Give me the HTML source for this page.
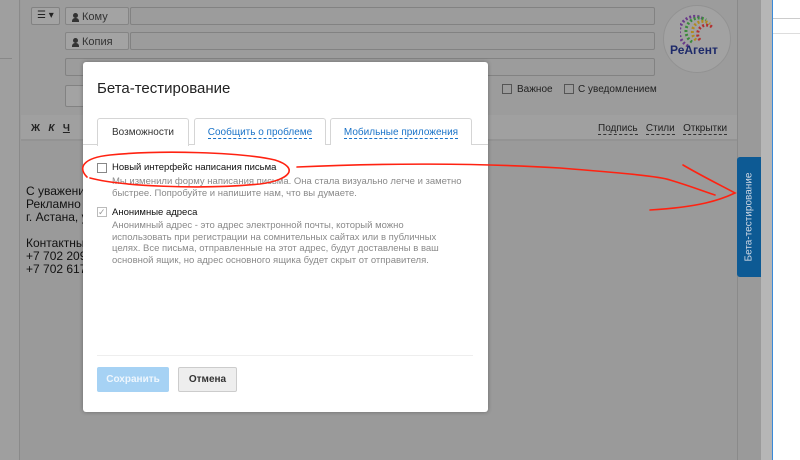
<!DOCTYPE html>
<html><head><meta charset="utf-8"><style>
*{box-sizing:border-box;margin:0;padding:0}
body{width:800px;height:460px;overflow:hidden;background:#9a9a9a;font-family:"Liberation Sans",Arial,sans-serif;position:relative}
.a{position:absolute}
.inp{position:absolute;background:#9c9c9c;border:1px solid #828282;border-radius:2px}
.lbl{position:absolute;background:#a3a3a3;border:1px solid #858585;border-radius:2px;font-size:11px;color:#333;padding:3px 0 0 16px}
.lbl:before{content:"";position:absolute;left:7px;top:5px;width:5px;height:5px;border-radius:50%;background:#333}
.lbl:after{content:"";position:absolute;left:6px;top:10px;width:7px;height:4px;background:#333;border-radius:3px 3px 0 0}
.dl{border-bottom:1px dashed #333}
.modal{position:absolute;left:83px;top:62px;width:405px;height:350px;background:#fff;border-radius:3px;box-shadow:0 0 4px rgba(0,0,0,.3)}
.tab{position:absolute;top:56px;height:27px;border:1px solid #d5d5d5;border-bottom:none;border-radius:3px 3px 0 0;font-size:10px;text-align:center;padding-top:8px;background:#fff}
.tab span{color:#1a73c8;border-bottom:1px dashed #1a73c8}
.cb{position:absolute;width:10px;height:10px;border:1px solid #888;background:#fff}
.t{position:absolute;font-size:9.5px;color:#111}
.d{position:absolute;font-size:9.5px;color:#8a8a8a;line-height:11.5px;white-space:nowrap}
</style></head><body>
<div class="a" style="left:0;top:0;width:20px;height:460px;background:#9f9f9f;border-right:1px solid #8a8a8a"></div>
<div class="a" style="left:0;top:58px;width:12px;height:1px;background:#888"></div>
<div class="a" style="left:21px;top:0;width:716px;height:115px;background:#9c9c9c"></div>
<div class="inp" style="left:31px;top:7px;width:29px;height:18px;background:#a3a3a3;font-size:10px;color:#222;padding:2px 0 0 5px">☰ ▾</div>
<div class="lbl" style="left:65px;top:7px;width:64px;height:18px">Кому</div>
<div class="inp" style="left:130px;top:7px;width:525px;height:18px"></div>
<div class="lbl" style="left:65px;top:32px;width:64px;height:18px">Копия</div>
<div class="inp" style="left:130px;top:32px;width:525px;height:18px"></div>
<div class="inp" style="left:65px;top:58px;width:590px;height:18px"></div>
<div class="inp" style="left:65px;top:85px;width:30px;height:22px;background:#a3a3a3"></div>
<div class="a" style="left:663px;top:5px;width:68px;height:68px;border-radius:50%;background:#a2a2a2;border:1px solid #929292"></div>
<svg class="a" style="left:680px;top:12px" width="40" height="36"><g fill="none" stroke-width="3" stroke-dasharray="2 2"><path d="M8 34 A14 14 0 0 1 22 6" stroke="#6a3a8a"/><path d="M12 30 A10 10 0 0 1 26 8" stroke="#3a8a3a"/><path d="M16 28 A8 8 0 0 1 30 12" stroke="#b08a20"/><path d="M20 28 A6 6 0 0 1 33 16" stroke="#b03030"/></g></svg>
<div class="a" style="left:670px;top:43px;font-size:12px;font-weight:bold;color:#1e2a6a">РеАгент</div>
<div class="cb" style="left:502px;top:84px;background:#9c9c9c;border-color:#555"></div>
<div class="a" style="left:517px;top:84px;font-size:10px;color:#222">Важное</div>
<div class="cb" style="left:564px;top:84px;background:#9c9c9c;border-color:#555"></div>
<div class="a" style="left:578px;top:84px;font-size:10px;color:#222">С уведомлением</div>
<div class="a" style="left:21px;top:115px;width:716px;height:26px;background:#a0a0a0;border-bottom:2px solid #939393"></div>
<div class="a" style="left:31px;top:123px;font-size:10px;font-weight:bold;color:#222">Ж &nbsp;&nbsp;<i>К</i> &nbsp;&nbsp;<u>Ч</u></div>
<div class="a" style="left:598px;top:123px;font-size:10px;color:#222"><span class="dl">Подпись</span>&nbsp;&nbsp;&nbsp;<span class="dl">Стили</span>&nbsp;&nbsp;&nbsp;<span class="dl">Открытки</span></div>
<div class="a" style="left:26px;top:185px;font-size:12px;color:#111;line-height:13px">С уважени<br>Рекламно -<br>г. Астана, у<br><br>Контактны<br>+7 702 209<br>+7 702 617</div>
<div class="a" style="left:737px;top:0;width:24px;height:460px;background:#9a9a9a;border-left:1px solid #8a8a8a"></div>
<div class="a" style="left:761px;top:0;width:11px;height:460px;background:#b6b6b6"></div>
<div class="a" style="left:772px;top:0;width:28px;height:460px;background:#fff;border-left:1px solid #3a8ad8"></div>
<div class="a" style="left:773px;top:18px;width:27px;height:1px;background:#ccc"></div>
<div class="a" style="left:773px;top:33px;width:27px;height:1px;background:#ddd"></div>
<div class="a" style="left:737px;top:157px;width:24px;height:120px;background:#0d5a94;border-radius:3px 0 0 3px"></div>
<div class="a" style="left:749px;top:217px;transform:translate(-50%,-50%) rotate(-90deg);font-size:10px;color:#cfd8e4;white-space:nowrap">Бета-тестирование</div>
<div class="modal">
<div class="a" style="left:14px;top:18px;font-size:15px;color:#222">Бета-тестирование</div>
<div class="a" style="left:0;top:82px;width:405px;height:1px;background:#d5d5d5"></div>
<div class="tab" style="left:14px;width:92px;height:28px;color:#333">Возможности</div>
<div class="tab" style="left:111px;width:132px"><span>Сообщить о проблеме</span></div>
<div class="tab" style="left:247px;width:142px"><span>Мобильные приложения</span></div>
<div class="cb" style="left:14px;top:101px"></div>
<div class="t" style="left:29px;top:100px">Новый интерфейс написания письма</div>
<div class="d" style="left:29px;top:114px">Мы изменили форму написания письма. Она стала визуально легче и заметно<br>быстрее. Попробуйте и напишите нам, что вы думаете.</div>
<div class="cb" style="left:14px;top:145px;border-color:#bbb;color:#999;font-size:9px;line-height:8px">✓</div>
<div class="t" style="left:29px;top:145px">Анонимные адреса</div>
<div class="d" style="left:29px;top:158px">Анонимный адрес - это адрес электронной почты, который можно<br>использовать при регистрации на сомнительных сайтах или в публичных<br>целях. Все письма, отправленные на этот адрес, будут доставлены в ваш<br>основной ящик, но адрес основного ящика будет скрыт от отправителя.</div>
<div class="a" style="left:14px;top:293px;width:376px;height:1px;background:#eee"></div>
<div class="a" style="left:14px;top:305px;width:72px;height:25px;background:#a6d2f4;color:#eef6fd;font-size:10px;font-weight:bold;text-align:center;padding-top:7px;border-radius:2px">Сохранить</div>
<div class="a" style="left:95px;top:305px;width:59px;height:25px;background:#eee;border:1px solid #ccc;color:#333;font-size:10px;font-weight:bold;text-align:center;padding-top:6px;border-radius:2px">Отмена</div>
</div>
<svg class="a" style="left:0;top:0" width="800" height="460"><g fill="none" stroke="#f21" stroke-width="1.6" stroke-linecap="round">
<path d="M87 177 C78 168 82 158 110 155 C160 150 240 152 275 160 C300 168 290 180 260 184 C200 190 120 186 90 178"/>
<path d="M297 167 C380 163 480 163 560 168 C610 172 660 176 670 180 C690 186 700 190 715 195"/>
<path d="M683 165 C700 175 720 185 735 193 C720 200 700 207 650 210"/>
</g></svg>
</body></html>
